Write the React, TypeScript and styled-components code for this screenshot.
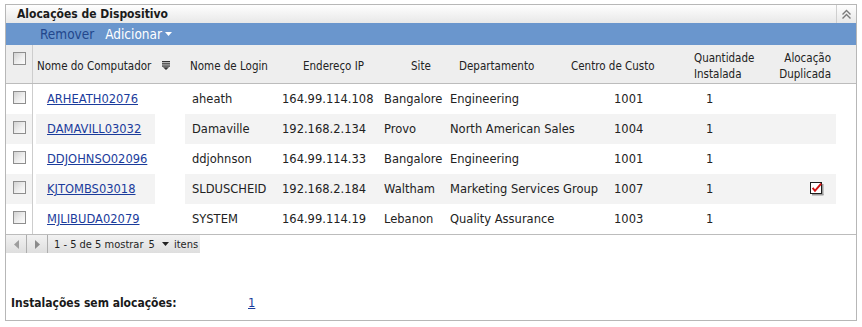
import React from "react";
import styled, { createGlobalStyle } from "styled-components";

const Global = createGlobalStyle`
  html, body { margin: 0; padding: 0; background: #fff; }
  body { font-family: "DejaVu Sans", sans-serif; color: #222; }
`;

const Page = styled.div`
  padding: 4px 0 0 5px;
`;

const Panel = styled.section`
  width: 852px;
  height: 317px;
  box-sizing: border-box;
  border: 1px solid #b7b7b7;
  display: flex;
  flex-direction: column;
`;

const TitleBar = styled.header`
  height: 18px;
  display: flex;
  align-items: center;
  background: linear-gradient(#fefefe, #e8e8e8);
`;

const Title = styled.h2`
  flex: 1;
  margin: 0;
  padding-left: 11px;
  font: bold 12px "DejaVu Sans Condensed", "DejaVu Sans", sans-serif;
  color: #1b1b1b;
`;

const CollapseBtn = styled.div`
  width: 19px;
  height: 18px;
  border-left: 1px solid #cfcfcf;
  display: flex;
  align-items: center;
  justify-content: center;
`;

const Toolbar = styled.nav`
  height: 22px;
  background: #6a96cd;
  display: flex;
  align-items: center;
  gap: 11px;
  padding-left: 34px;
  font: 13.5px "DejaVu Sans Condensed", "DejaVu Sans", sans-serif;
`;

const ToolAction = styled.span<{ $enabled?: boolean }>`
  color: ${(p) => (p.$enabled ? "#ffffff" : "#22478c")};
  display: inline-flex;
  align-items: center;
  gap: 3px;
`;

const HeaderRow = styled.div`
  height: 39px;
  box-sizing: border-box;
  border-bottom: 1px solid #bcbcbc;
  background: #eeeeee;
  display: grid;
  grid-template-columns: 27px 153px 113px 108px 48px 112px 123px 80px 66px 1fr;
  font: 11.5px "DejaVu Sans Condensed", "DejaVu Sans", sans-serif;
  color: #222;
`;

const HeadCell = styled.div<{ $right?: boolean }>`
  display: flex;
  align-items: center;
  justify-content: ${(p) => (p.$right ? "flex-end" : "flex-start")};
  text-align: ${(p) => (p.$right ? "right" : "left")};
  padding: 3px ${(p) => (p.$right ? "5px" : "0")} 0 ${(p) => (p.$right ? "0" : "4px")};
  line-height: 16px;
  white-space: nowrap;
`;

const CheckHeadCell = styled.div`
  border-right: 1px solid #cdcdcd;
  padding: 7px 0 0 7px;
`;

const SortIcon = styled.svg`
  margin-left: 11px;
  margin-bottom: 1px;
`;

const Body = styled.div`
  border-bottom: 1px solid #bcbcbc;
`;

const Cell = styled.div`
  display: flex;
  align-items: center;
  padding-left: 7px;
  white-space: nowrap;
`;

const Spacer = styled.div``;

const Row = styled.div<{ $alt?: boolean }>`
  height: 30px;
  display: grid;
  grid-template-columns: 27px 3px 119px 30px 90px 102px 66px 164px 92px 78px 59px 1fr;
  font: 11.5px "DejaVu Sans", sans-serif;
  color: #222;
  & > ${Cell} {
    background: ${(p) => (p.$alt ? "#f3f3f3" : "transparent")};
  }
`;

const CheckCell = styled(Cell)`
  border-right: 1px solid #cdcdcd;
  padding-left: 7px;
  align-items: flex-start;
  padding-top: 7px;
`;

const NameCell = styled(Cell)`
  padding-left: 11px;
`;

const DupCell = styled(Cell)`
  justify-content: flex-end;
  padding-right: 12px;
`;

const Box = styled.span`
  width: 13px;
  height: 13px;
  box-sizing: border-box;
  border: 1px solid #8e8e8e;
  background: linear-gradient(135deg, #d2d2d2 0%, #eeeeee 55%, #fcfcfc 100%);
  display: inline-block;
`;

const Link = styled.a`
  color: #1b3c9c;
  text-decoration: underline;
  cursor: pointer;
`;

const Pager = styled.div`
  width: 194px;
  height: 18px;
  display: flex;
  align-items: stretch;
  background: linear-gradient(#f2f2f2, #dedede);
  font: 11px "DejaVu Sans Condensed", "DejaVu Sans", sans-serif;
  color: #1f1f1f;
`;

const PagerBtn = styled.div`
  width: 20px;
  border-right: 1px solid #adadad;
  display: flex;
  align-items: center;
  justify-content: center;
`;

const PagerText = styled.div`
  display: flex;
  align-items: center;
  gap: 5px;
  padding-left: 6px;
  white-space: pre;
`;

const PageSize = styled.span`
  display: inline-flex;
  align-items: center;
  gap: 4px;
`;

const Footer = styled.div`
  margin-top: auto;
  padding: 0 0 10px 5px;
  display: flex;
  align-items: center;
  line-height: 14px;
`;

const FooterLabel = styled.span`
  width: 237px;
  font: bold 12px "DejaVu Sans Condensed", "DejaVu Sans", sans-serif;
  color: #1a1a1a;
`;

const FooterValue = styled(Link)`
  font: 11.5px "DejaVu Sans", sans-serif;
`;

type Alloc = {
  name: string;
  login: string;
  ip: string;
  site: string;
  dept: string;
  cost: string;
  qty: string;
  dup?: boolean;
};

const rows: Alloc[] = [
  { name: "ARHEATH02076", login: "aheath", ip: "164.99.114.108", site: "Bangalore", dept: "Engineering", cost: "1001", qty: "1" },
  { name: "DAMAVILL03032", login: "Damaville", ip: "192.168.2.134", site: "Provo", dept: "North American Sales", cost: "1004", qty: "1" },
  { name: "DDJOHNSO02096", login: "ddjohnson", ip: "164.99.114.33", site: "Bangalore", dept: "Engineering", cost: "1001", qty: "1" },
  { name: "KJTOMBS03018", login: "SLDUSCHEID", ip: "192.168.2.184", site: "Waltham", dept: "Marketing Services Group", cost: "1007", qty: "1", dup: true },
  { name: "MJLIBUDA02079", login: "SYSTEM", ip: "164.99.114.19", site: "Lebanon", dept: "Quality Assurance", cost: "1003", qty: "1" },
];

const DoubleChevron = () => (
  <svg width="11" height="11" viewBox="0 0 11 11">
    <polyline points="1.5,5.5 5.5,1.5 9.5,5.5" fill="none" stroke="#7a7a7a" strokeWidth="1.4" />
    <polyline points="1.5,9.5 5.5,5.5 9.5,9.5" fill="none" stroke="#7a7a7a" strokeWidth="1.4" />
  </svg>
);

const DownTri = ({ color }: { color: string }) => (
  <svg width="7" height="4" viewBox="0 0 7 4">
    <polygon points="0,0 7,0 3.5,4" fill={color} />
  </svg>
);

const CheckedBox = () => (
  <svg width="14" height="14" viewBox="0 0 14 14">
    <rect x="12" y="2" width="1.5" height="11" fill="#9a9a9a" />
    <rect x="2" y="12" width="11.5" height="1.5" fill="#9a9a9a" />
    <rect x="0.5" y="0.5" width="11" height="11" fill="#fff" stroke="#1e1e1e" />
    <path d="M2.6 5.8 L5 8.8 L11.2 1.6" fill="none" stroke="#d11212" strokeWidth="2" />
  </svg>
);

export default function App() {
  return (
    <>
      <Global />
      <Page>
        <Panel>
          <TitleBar>
            <Title>Alocações de Dispositivo</Title>
            <CollapseBtn>
              <DoubleChevron />
            </CollapseBtn>
          </TitleBar>
          <Toolbar>
            <ToolAction>Remover</ToolAction>
            <ToolAction $enabled>
              Adicionar <DownTri color="#ffffff" />
            </ToolAction>
          </Toolbar>
          <HeaderRow>
            <CheckHeadCell>
              <Box />
            </CheckHeadCell>
            <HeadCell>
              Nome do Computador
              <SortIcon width="8" height="9" viewBox="0 0 8 9">
                <rect x="0" y="0" width="8" height="1.3" fill="#333" />
                <rect x="0" y="2.2" width="8" height="1.3" fill="#333" />
                <rect x="0" y="4.4" width="8" height="1.3" fill="#333" />
                <polygon points="1,6.2 7,6.2 4,9" fill="#333" />
              </SortIcon>
            </HeadCell>
            <HeadCell>Nome de Login</HeadCell>
            <HeadCell>Endereço IP</HeadCell>
            <HeadCell>Site</HeadCell>
            <HeadCell>Departamento</HeadCell>
            <HeadCell>Centro de Custo</HeadCell>
            <HeadCell>
              Quantidade
              <br />
              Instalada
            </HeadCell>
            <HeadCell $right>
              Alocação
              <br />
              Duplicada
            </HeadCell>
            <Spacer />
          </HeaderRow>
          <Body>
            {rows.map((r, i) => (
              <Row key={r.name} $alt={i % 2 === 1}>
                <CheckCell>
                  <Box />
                </CheckCell>
                <Spacer />
                <NameCell>
                  <Link>{r.name}</Link>
                </NameCell>
                <Spacer />
                <Cell>{r.login}</Cell>
                <Cell>{r.ip}</Cell>
                <Cell>{r.site}</Cell>
                <Cell>{r.dept}</Cell>
                <Cell>{r.cost}</Cell>
                <Cell>{r.qty}</Cell>
                <DupCell>{r.dup ? <CheckedBox /> : null}</DupCell>
                <Spacer />
              </Row>
            ))}
          </Body>
          <Pager>
            <PagerBtn>
              <svg width="5" height="9" viewBox="0 0 5 9">
                <polygon points="5,0 5,9 0,4.5" fill="#9d9d9d" />
              </svg>
            </PagerBtn>
            <PagerBtn>
              <svg width="5" height="9" viewBox="0 0 5 9">
                <polygon points="0,0 0,9 5,4.5" fill="#8a8a8a" />
              </svg>
            </PagerBtn>
            <PagerText>
              1 - 5 de 5 mostrar
              <PageSize>
                5 <DownTri color="#222" />
              </PageSize>
              itens
            </PagerText>
          </Pager>
          <Footer>
            <FooterLabel>Instalações sem alocações:</FooterLabel>
            <FooterValue>1</FooterValue>
          </Footer>
        </Panel>
      </Page>
    </>
  );
}
